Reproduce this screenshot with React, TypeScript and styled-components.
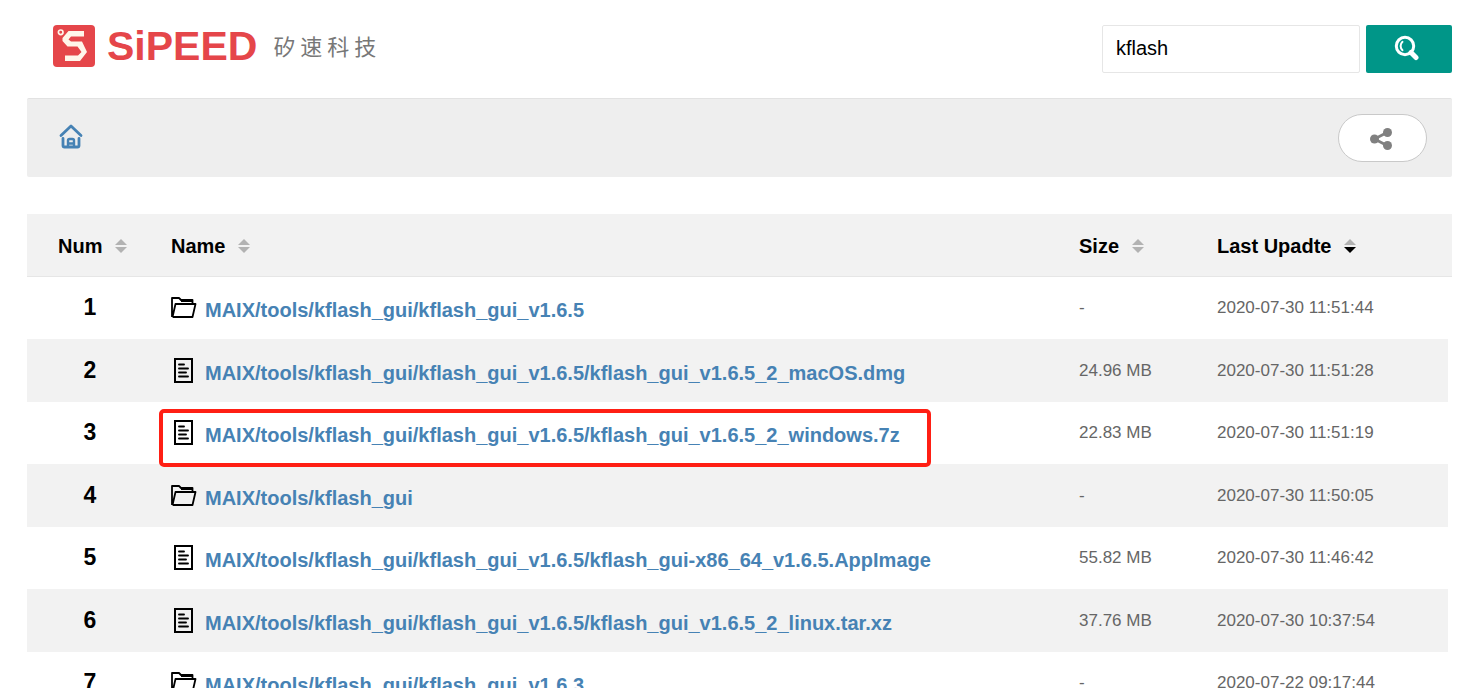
import React from "react";
import styled, { createGlobalStyle } from "styled-components";

const GlobalStyle = createGlobalStyle`
  * { box-sizing: border-box; }
  body {
    margin: 0;
    background: #fff;
    color: #000;
    font-family: "Liberation Sans", Arial, "Noto Sans CJK SC", sans-serif;
  }
`;

const Page = styled.div`
  height: 100vh;
  overflow: hidden;
  padding: 25px 25px 0 27px;
`;

const Header = styled.header`
  display: flex;
  justify-content: space-between;
  align-items: flex-start;
  height: 73px;
`;

const Brand = styled.a`
  display: flex;
  align-items: center;
  gap: 12px;
  margin-left: 26px;
  height: 42px;
  text-decoration: none;
`;

const Wordmark = styled.span`
  color: #e5464a;
  font-size: 41px;
  font-weight: 700;
  line-height: 42px;
`;

const BrandName = styled.span`
  margin-left: 4px;
  color: #777;
  font-family: "Noto Sans CJK SC", sans-serif;
  font-size: 22px;
  font-weight: 400;
  line-height: 40px;
  padding-bottom: 2px;
`;

const SearchForm = styled.form`
  display: flex;
  gap: 6px;
`;

const SearchInput = styled.input`
  width: 258px;
  height: 48px;
  padding: 0 13px 2px;
  border: 1px solid #e6e6e6;
  border-radius: 2px;
  background: #fff;
  color: #000;
  font-family: inherit;
  font-size: 20px;
  outline: none;
`;

const SearchButton = styled.button`
  display: flex;
  align-items: center;
  justify-content: center;
  width: 86px;
  height: 48px;
  padding: 0 4px 2px 0;
  border: 0;
  border-radius: 2px;
  background: #009688;
`;

const PathBar = styled.nav`
  display: flex;
  align-items: center;
  justify-content: space-between;
  height: 79px;
  padding: 0 25px 0 32px;
  border-top: 1px solid #e2e2e2;
  border-radius: 2px;
  background: #eee;
`;

const HomeLink = styled.a`
  display: flex;
  padding-bottom: 4px;
  color: #4682b4;
`;

const ShareButton = styled.button`
  display: flex;
  align-items: center;
  justify-content: center;
  width: 89px;
  height: 48px;
  padding: 2px 4px 0 0;
  border: 1px solid #c9c9c9;
  border-radius: 24px;
  background: #fff;
  color: #808080;
`;

const FileTable = styled.table`
  width: 100%;
  margin-top: 37px;
  border-collapse: separate;
  border-spacing: 0;
  table-layout: fixed;
`;

const Column = styled.col<{ $width?: number }>`
  width: ${(p) => (p.$width ? `${p.$width}px` : "auto")};
`;

const HeadCell = styled.th<{ $indent?: number }>`
  height: 63px;
  padding: 2px 0 0 ${(p) => p.$indent ?? 26}px;
  border-bottom: 1px solid #e6e6e6;
  background: #f2f2f2;
  text-align: left;
`;

const SortButton = styled.button`
  display: flex;
  align-items: center;
  gap: 13px;
  padding: 0;
  border: 0;
  background: none;
  color: #000;
  font-family: inherit;
  font-size: 20px;
  font-weight: 700;
  line-height: 24px;
`;

const Row = styled.tr`
  height: 62px;

  &:nth-child(even) {
    height: 63px;
  }

  &:nth-child(even) > * {
    background: #f2f2f2;
  }
`;

const NumCell = styled.th`
  padding: 0 0 2px 8px;
  font-size: 23px;
  font-weight: 700;
  line-height: 26px;
  text-align: center;
`;

const NameCell = styled.td`
  padding: 0 0 0 26px;
  white-space: nowrap;
`;

const InfoCell = styled.td`
  padding: 0 0 0 26px;
  color: #666;
  font-size: 17px;
  line-height: 24px;
  white-space: nowrap;
`;

const FileEntry = styled.div<{ $marked?: boolean }>`
  position: relative;
  display: inline-flex;
  align-items: center;
  gap: 8px;
  vertical-align: middle;

  &::after {
    content: "";
    display: ${(p) => (p.$marked ? "block" : "none")};
    position: absolute;
    inset: -10px -31px -20px -12px;
    border: 4px solid #ff1f14;
    border-radius: 5px;
    pointer-events: none;
  }
`;

const FileLink = styled.a`
  padding-top: 4px;
  color: #4682b4;
  font-size: 20px;
  font-weight: 700;
  line-height: 24px;
  text-decoration: none;
`;

function BrandMark() {
  return (
    <svg width="42" height="42" viewBox="0 0 42 42" aria-hidden="true">
      <rect width="42" height="42" rx="4" fill="#e5464a" />
      <circle cx="7.700" cy="7.300" r="2.300" fill="none" stroke="#fff5ea" strokeWidth="1.700" />
      <path
        d="M31 6H15.500L9.500 13V16L14.500 21.500H24.500L28.500 27L25 30.500H12V36H27L34 27L29 16.500H18L15.500 14.500L18 11.500H31Z"
        fill="#fff5ea"
      />
    </svg>
  );
}

function SearchIcon() {
  return (
    <svg width="26" height="26" viewBox="0 0 26 26" fill="none" stroke="#fff" aria-hidden="true">
      <circle cx="11" cy="11" r="8.700" strokeWidth="3" />
      <path d="M8.500 6.800C6 9 6 13 8.500 15.200" strokeWidth="2" strokeLinecap="round" />
      <path d="M17 17.500L22 22.500" strokeWidth="5" strokeLinecap="round" />
    </svg>
  );
}

function HomeIcon() {
  return (
    <svg
      width="24"
      height="26"
      viewBox="0 0 24 26"
      fill="none"
      stroke="currentColor"
      strokeWidth="2.800"
      strokeLinecap="round"
      strokeLinejoin="round"
      aria-hidden="true"
    >
      <path d="M2 12.500L12 3L22 12.500" />
      <path d="M4 15.500V22.500Q4 24 5.500 24H18.500Q20 24 20 22.500V15.500" />
      <path d="M9 23.500V17.500Q9 16 10.500 16H13.500Q15 16 15 17.500V23.500M10.500 20.500H13.500" strokeWidth="2.400" />
    </svg>
  );
}

function ShareIcon() {
  return (
    <svg width="24" height="24" viewBox="0 0 24 24" fill="currentColor" aria-hidden="true">
      <path d="M18 5.500L5.500 12L18 18.500" fill="none" stroke="currentColor" strokeWidth="2.800" />
      <circle cx="5.500" cy="12" r="4.500" />
      <circle cx="18.500" cy="5.500" r="4.500" />
      <circle cx="18.500" cy="18.500" r="4.500" />
    </svg>
  );
}

function SortIcon({ descending }: { descending?: boolean }) {
  return (
    <svg width="12" height="14" viewBox="0 0 12 14" aria-hidden="true">
      <path d="M0 6L6 0L12 6Z" fill="#b2b2b2" />
      <path d="M0 8H12L6 14Z" fill={descending ? "#000" : "#b2b2b2"} />
    </svg>
  );
}

function FolderIcon() {
  return (
    <svg width="26" height="28" viewBox="0 0 26 28" fill="none" stroke="#000" aria-hidden="true">
      <path
        d="M1 23V4H8L10 6H21.500V10M1.500 23L4.500 10H24.500L21.500 23H1.500"
        strokeWidth="1.800"
        strokeLinejoin="round"
      />
      <path d="M10 7.500H21" strokeWidth="1" />
    </svg>
  );
}

function DocumentIcon() {
  return (
    <svg width="26" height="28" viewBox="0 0 26 28" fill="none" stroke="#000" aria-hidden="true">
      <rect x="4" y="2" width="17" height="23" strokeWidth="2" />
      <path d="M8 7.500H13M8 11.500H17M8 15.500H15M8 19.500H17" strokeWidth="1.900" strokeLinecap="round" />
    </svg>
  );
}

type Entry = {
  kind: "folder" | "file";
  name: string;
  size: string;
  updated: string;
  marked?: boolean;
};

const entries: Entry[] = [
  { kind: "folder", name: "MAIX/tools/kflash_gui/kflash_gui_v1.6.5", size: "-", updated: "2020-07-30 11:51:44" },
  { kind: "file", name: "MAIX/tools/kflash_gui/kflash_gui_v1.6.5/kflash_gui_v1.6.5_2_macOS.dmg", size: "24.96 MB", updated: "2020-07-30 11:51:28" },
  { kind: "file", name: "MAIX/tools/kflash_gui/kflash_gui_v1.6.5/kflash_gui_v1.6.5_2_windows.7z", size: "22.83 MB", updated: "2020-07-30 11:51:19", marked: true },
  { kind: "folder", name: "MAIX/tools/kflash_gui", size: "-", updated: "2020-07-30 11:50:05" },
  { kind: "file", name: "MAIX/tools/kflash_gui/kflash_gui_v1.6.5/kflash_gui-x86_64_v1.6.5.AppImage", size: "55.82 MB", updated: "2020-07-30 11:46:42" },
  { kind: "file", name: "MAIX/tools/kflash_gui/kflash_gui_v1.6.5/kflash_gui_v1.6.5_2_linux.tar.xz", size: "37.76 MB", updated: "2020-07-30 10:37:54" },
  { kind: "folder", name: "MAIX/tools/kflash_gui/kflash_gui_v1.6.3", size: "-", updated: "2020-07-22 09:17:44" },
];

export default function App() {
  return (
    <>
      <GlobalStyle />
      <Page>
        <Header>
          <Brand href="#">
            <BrandMark />
            <Wordmark>SiPEED</Wordmark>
            <BrandName lang="zh">矽 速 科 技</BrandName>
          </Brand>
          <SearchForm role="search" onSubmit={(e) => e.preventDefault()}>
            <SearchInput type="text" aria-label="Search files" defaultValue="kflash" />
            <SearchButton type="submit" aria-label="Search">
              <SearchIcon />
            </SearchButton>
          </SearchForm>
        </Header>

        <PathBar aria-label="Path">
          <HomeLink href="#" aria-label="Home">
            <HomeIcon />
          </HomeLink>
          <ShareButton type="button" aria-label="Share">
            <ShareIcon />
          </ShareButton>
        </PathBar>

        <FileTable>
          <colgroup>
            <Column $width={118} />
            <Column />
            <Column $width={138} />
            <Column $width={257} />
            <Column $width={4} />
          </colgroup>
          <thead>
            <tr>
              <HeadCell scope="col" $indent={31}>
                <SortButton type="button">Num <SortIcon /></SortButton>
              </HeadCell>
              <HeadCell scope="col">
                <SortButton type="button">Name <SortIcon /></SortButton>
              </HeadCell>
              <HeadCell scope="col">
                <SortButton type="button">Size <SortIcon /></SortButton>
              </HeadCell>
              <HeadCell scope="col" colSpan={2} aria-sort="descending">
                <SortButton type="button">Last Upadte <SortIcon descending /></SortButton>
              </HeadCell>
            </tr>
          </thead>
          <tbody>
            {entries.map((entry, i) => (
              <Row key={entry.name}>
                <NumCell scope="row">{i + 1}</NumCell>
                <NameCell>
                  <FileEntry $marked={entry.marked}>
                    {entry.kind === "folder" ? <FolderIcon /> : <DocumentIcon />}
                    <FileLink href="#">{entry.name}</FileLink>
                  </FileEntry>
                </NameCell>
                <InfoCell>{entry.size}</InfoCell>
                <InfoCell>{entry.updated}</InfoCell>
              </Row>
            ))}
          </tbody>
        </FileTable>
      </Page>
    </>
  );
}
